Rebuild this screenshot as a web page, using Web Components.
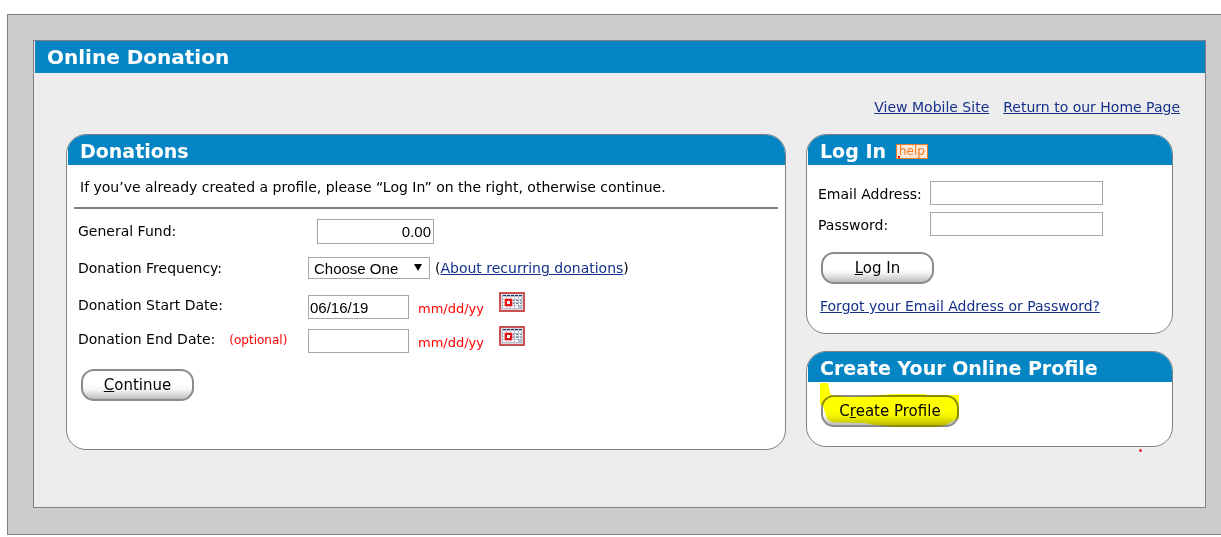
<!DOCTYPE html>
<html lang="en">
<head>
<meta charset="utf-8">
<title>Online Donation</title>
<style>
  body { margin: 14px 0 0 7px; background: #fff; color: #000; font: 14px/20px Verdana, "DejaVu Sans", sans-serif; overflow: hidden; }
</style>
</head>
<body>
<donation-page></donation-page>
<script>
const define = (name, html) => {
  const template = document.createElement('template');
  template.innerHTML = html;
  customElements.define(name, class extends HTMLElement {
    constructor() {
      super();
      this.attachShadow({ mode: 'open' }).append(template.content.cloneNode(true));
    }
  });
};

define('page-frame', `
<style>
  :host { display: block; box-sizing: border-box; padding: 25px 15px 26px 25px; background: #ccc; border: 1px solid #808080; border-right: 0; }
  main { min-height: 466px; background: #ededed; border: 1px solid #808080; }
  h1 { margin: 0 0 0 1px; padding: 0 12px; background: #0685c4; color: #fff; font-size: 20px; line-height: 32px; }
</style>
<main><h1><slot name="heading"></slot></h1><slot></slot></main>`);

define('site-links', `
<style>
  :host { display: flex; justify-content: flex-end; gap: 14px; padding: 24px 25px 0; }
  a { color: #15318a; }
</style>
<a href="#mobile">View Mobile Site</a><a href="#home">Return to our Home Page</a>`);

define('panel-card', `
<style>
  :host { display: block; }
  section { box-sizing: border-box; height: 100%; background: #fff; border: 1px solid #808080; border-radius: 20px; overflow: hidden; }
  h2 { display: flex; align-items: center; gap: 10px; margin: 0 0 0 1px; padding: 2px 12px 0; background: #0685c4; color: #fff; font-size: 19px; line-height: 28px; }
</style>
<section><h2><slot name="heading"></slot></h2><slot></slot></section>`);

define('pill-button', `
<style>
  :host { display: inline-flex; }
  button { width: 100%; min-width: 113px; height: 32px; padding: 0; font: inherit; font-size: 15px; color: #000; border: 2px solid #8c8c8c; border-radius: 13px; background: linear-gradient(#fff 50%, #f4f4f4 68%, #bdbdbd); }
</style>
<button type="button"><slot></slot></button>`);

define('help-badge', `
<style>
  :host { display: inline-flex; }
  a { box-sizing: border-box; display: block; width: 32px; height: 15px; border: 1px solid #f47a20; background: #fdeadc; color: #f47a20; font: 12px/12px "DejaVu Sans", sans-serif; text-align: center; text-decoration: none; position: relative; }
  i { position: absolute; left: 1px; bottom: 0; width: 2px; height: 2px; background: #f00; }
</style>
<a href="#help">help<i></i></a>`);

define('calendar-button', `
<style>
  :host { display: inline-flex; }
  button { padding: 0; border: 0; background: none; }
  svg { display: block; }
</style>
<button type="button" aria-label="Open calendar">
<svg width="26" height="20" viewBox="0 0 26 20">
  <rect x="1" y="1" width="24" height="18" fill="#dbd8dc" stroke="#c95353" stroke-width="2"/>
  <rect x="3" y="3" width="20" height="14" fill="#b4bfcb"/>
  <path d="M4 3.5h19" stroke="#173a75" stroke-dasharray="3 1"/>
  <path d="M4 5h3v2H4zm4 0h3v2H8zm4 0h3v2h-3zm4 0h3v2h-3zm4 0h2v2h-2zM4 8h3v2H4zm8 0h3v2h-3zm4 0h3v2h-3zm4 0h2v2h-2zM4 11h3v2H4zm4 0h3v2H8zm4 0h3v2h-3zm4 0h3v2h-3zm4 0h2v2h-2zM4 14h3v2H4zm4 0h3v2H8zm4 0h3v2h-3zm4 0h3v2h-3z" fill="#fff"/>
  <path d="M13 8.5h9M13 11.5h9" stroke="#59718f" stroke-dasharray="2 2"/>
  <rect x="5" y="6" width="9" height="9" rx="2" fill="#f6a8a8"/>
  <rect x="7" y="8" width="5" height="5" fill="#fff" stroke="#e01515" stroke-width="2"/>
</svg></button>`);

define('donation-form', `
<style>
  :host { display: block; padding: 12px 7px 0; }
  p { margin: 0; padding: 0 6px 10px; border-bottom: 2px solid #808080; }
  form { display: grid; grid-template-columns: 230px 1fr; grid-template-rows: 36px 38px 40px 28px; align-items: center; padding: 4px 4px 0; }
  .field { display: flex; align-items: center; }
  input, select { box-sizing: border-box; margin: 0; border: 1px solid #a6a6a6; border-radius: 0; background: #fff; color: #000; font: 15px "Liberation Sans", Arial, sans-serif; }
  #fund { width: 117px; height: 25px; margin-left: 9px; padding: 1px 2px; text-align: right; }
  .date { width: 101px; height: 24px; padding: 1px; }
  .date-label { padding-bottom: 4px; }
  .picker { position: relative; margin-right: 5px; }
  select { display: block; width: 122px; height: 22px; padding: 0 5px; appearance: none; }
  .picker svg { position: absolute; right: 8px; top: 7px; pointer-events: none; }
  a { color: #15318a; }
  small { color: #f00; }
  .hint { width: 81px; margin-left: 9px; padding-top: 4px; font-size: 13px; }
  .optional { margin-left: 14px; font-size: 12px; }
  calendar-button { margin-bottom: 10px; }
  pill-button { grid-column: 1 / -1; justify-self: start; margin: 14px 0 0 3px; }
</style>
<p>If you’ve already created a profile, please “Log In” on the right, otherwise continue.</p>
<form>
  <label for="fund">General Fund:</label>
  <div class="field"><input id="fund" value="0.00"></div>
  <label for="frequency">Donation Frequency:</label>
  <div class="field"><span class="picker"><select id="frequency"><option>Choose One</option></select><svg width="8" height="8" viewBox="0 0 8 8"><path d="M0 0h8L4 7z"/></svg></span>(<a href="#recurring">About recurring donations</a>)</div>
  <label class="date-label" for="start">Donation Start Date:</label>
  <div class="field"><input class="date" id="start" value="06/16/19"><small class="hint">mm/dd/yy</small><calendar-button></calendar-button></div>
  <label class="date-label" for="end">Donation End Date:<small class="optional">(optional)</small></label>
  <div class="field"><input class="date" id="end"><small class="hint">mm/dd/yy</small><calendar-button></calendar-button></div>
  <pill-button><u>C</u>ontinue</pill-button>
</form>`);

define('login-form', `
<style>
  :host { display: block; padding: 16px 11px 17px; }
  form { display: grid; grid-template-columns: 112px 173px; row-gap: 7px; align-items: center; }
  label { padding-top: 2px; }
  input { box-sizing: border-box; width: 100%; height: 24px; border: 1px solid #a6a6a6; font: 15px "Liberation Sans", Arial, sans-serif; }
  pill-button { grid-column: 1 / -1; justify-self: start; margin: 9px 0 0 3px; }
  a { grid-column: 1 / -1; justify-self: start; margin: 5px 0 0 2px; color: #15318a; }
</style>
<form>
  <label for="email">Email Address:</label><input id="email" type="email">
  <label for="password">Password:</label><input id="password" type="password">
  <pill-button><u>L</u>og In</pill-button>
  <a href="#forgot">Forgot your Email Address or Password?</a>
</form>`);

define('create-profile', `
<style>
  :host { display: block; padding: 13px 14px 19px; }
  .marked { position: relative; display: inline-flex; vertical-align: top; width: 138px; }
  pill-button { width: 100%; }
  svg { position: absolute; left: -1px; top: -12px; mix-blend-mode: multiply; pointer-events: none; }
</style>
<div class="marked"><pill-button>C<u>r</u>eate Profile</pill-button>
<svg width="139" height="44" viewBox="60 129 417 132"><path fill="#ff0" d="M60 129H84L92 165L150 171L202 169L275 162H378V165H477V235L465 240L436 256L408 261H285L219 254L192 249L97 247L82 238L75 217L68 195H60Z"/></svg></div>`);

define('donation-page', `
<style>
  :host { display: block; }
  .columns { display: grid; grid-template-columns: minmax(0, 1fr) 367px; gap: 20px; align-items: start; padding: 17px 32px 0; }
  .donations { height: 316px; }
  aside { display: grid; gap: 17px; position: relative; }
  .speck { position: absolute; right: 31px; bottom: -5px; width: 3px; height: 3px; border-radius: 50%; background: #f02030; }
</style>
<page-frame>
  <span slot="heading">Online Donation</span>
  <site-links></site-links>
  <div class="columns">
    <panel-card class="donations"><span slot="heading">Donations</span><donation-form></donation-form></panel-card>
    <aside>
      <panel-card><span slot="heading">Log In</span><help-badge slot="heading"></help-badge><login-form></login-form></panel-card>
      <panel-card><span slot="heading">Create Your Online Profile</span><create-profile></create-profile></panel-card>
      <span class="speck"></span>
    </aside>
  </div>
</page-frame>`);
</script>
</body>
</html>
